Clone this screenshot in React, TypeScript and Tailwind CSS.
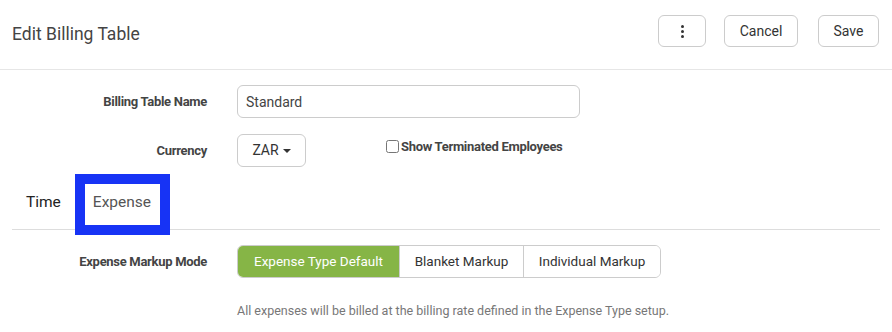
import { useState } from 'react'

const modes = [
  { label: 'Expense Type Default', w: 'w-[161px]' },
  { label: 'Blanket Markup', w: 'w-[124px]' },
  { label: 'Individual Markup', w: 'w-[137px]' }
]

export default function App () {
  const [mode, setMode] = useState(0)
  const [name, setName] = useState('Standard')

  return (
    <div className="w-[892px] h-[332px] bg-white overflow-hidden text-[#333]" style={{ fontFamily: 'Roboto, "Liberation Sans", sans-serif' }}>
      <div className="h-[70px] flex items-start justify-between pl-3 pr-[13px] border-b border-[#e6e6e6]">
        <h1 className="mt-[21px] text-[17.5px] text-[#444]">Edit Billing Table</h1>
        <div className="flex mt-[15px]">
          <button className="w-12 h-8 border border-[#ccc] rounded-md flex items-center justify-center">
            <span className="flex flex-col gap-[2px]">
              <span className="w-[3px] h-[3px] rounded-full bg-[#333]" />
              <span className="w-[3px] h-[3px] rounded-full bg-[#333]" />
              <span className="w-[3px] h-[3px] rounded-full bg-[#333]" />
            </span>
          </button>
          <button className="ml-[18px] w-[74px] h-8 border border-[#ccc] rounded-md text-[14px] text-[#333]">Cancel</button>
          <button className="ml-5 w-[61px] h-8 border border-[#ccc] rounded-md text-[14px] text-[#333]">Save</button>
        </div>
      </div>

      <div className="flex items-center mt-[15px]">
        <label className="w-[207px] text-right text-[13px] font-bold text-[#444] tracking-[-0.3px]">Billing Table Name</label>
        <input
          value={name}
          onChange={e => setName(e.target.value)}
          className="ml-[30px] w-[343px] h-[33px] border border-[#ccc] rounded-md px-2 text-[14px] text-[#444] outline-none"
        />
      </div>

      <div className="flex items-start mt-4">
        <label className="w-[207px] text-right text-[13px] font-bold text-[#444] mt-[7px] tracking-[-0.3px]">Currency</label>
        <button className="ml-[30px] w-[69px] h-[33px] border border-[#ccc] rounded-md text-[14px] text-[#333] flex items-center justify-center gap-1">
          ZAR
          <span className="w-0 h-0 border-l-[4px] border-r-[4px] border-t-[4px] border-l-transparent border-r-transparent border-t-[#333]" />
        </button>
        <label className="ml-[80px] mt-[3px] flex items-center gap-[2px] text-[13px] font-bold text-[#444] tracking-[-0.3px]">
          <input type="checkbox" className="w-[13px] h-[13px] m-0" />
          Show Terminated Employees
        </label>
      </div>

      <div className="mx-3 mt-[10px] h-[53px] border-b border-[#ddd] flex items-center text-[15.5px]">
        <span className="ml-[14px] text-[#222]">Time</span>
        <span className="relative ml-8 text-[#555]">
          Expense
          <span className="absolute left-[-18px] top-[-17px] w-[95px] h-[61px] border-[10px] border-[#1733f5]" />
        </span>
      </div>

      <div className="flex items-center mt-[15px]">
        <label className="w-[207px] text-right text-[13px] font-bold text-[#444] tracking-[-0.3px]">Expense Markup Mode</label>
        <div className="ml-[30px] flex h-[33px] border border-[#ccc] rounded-md overflow-hidden text-[13.5px]">
          {modes.map((m, i) => (
            <button
              key={m.label}
              onClick={() => setMode(i)}
              className={
                (i === mode ? 'bg-[#86b546] text-white ' : 'bg-white text-[#333] ') +
                (i > 0 ? 'border-l border-[#ccc] ' : '') +
                'h-full ' + m.w
              }
            >
              {m.label}
            </button>
          ))}
        </div>
      </div>

      <p className="ml-[237px] mt-[24px] text-[12.5px] text-[#777]">
        All expenses will be billed at the billing rate defined in the Expense Type setup.
      </p>
    </div>
  )
}
